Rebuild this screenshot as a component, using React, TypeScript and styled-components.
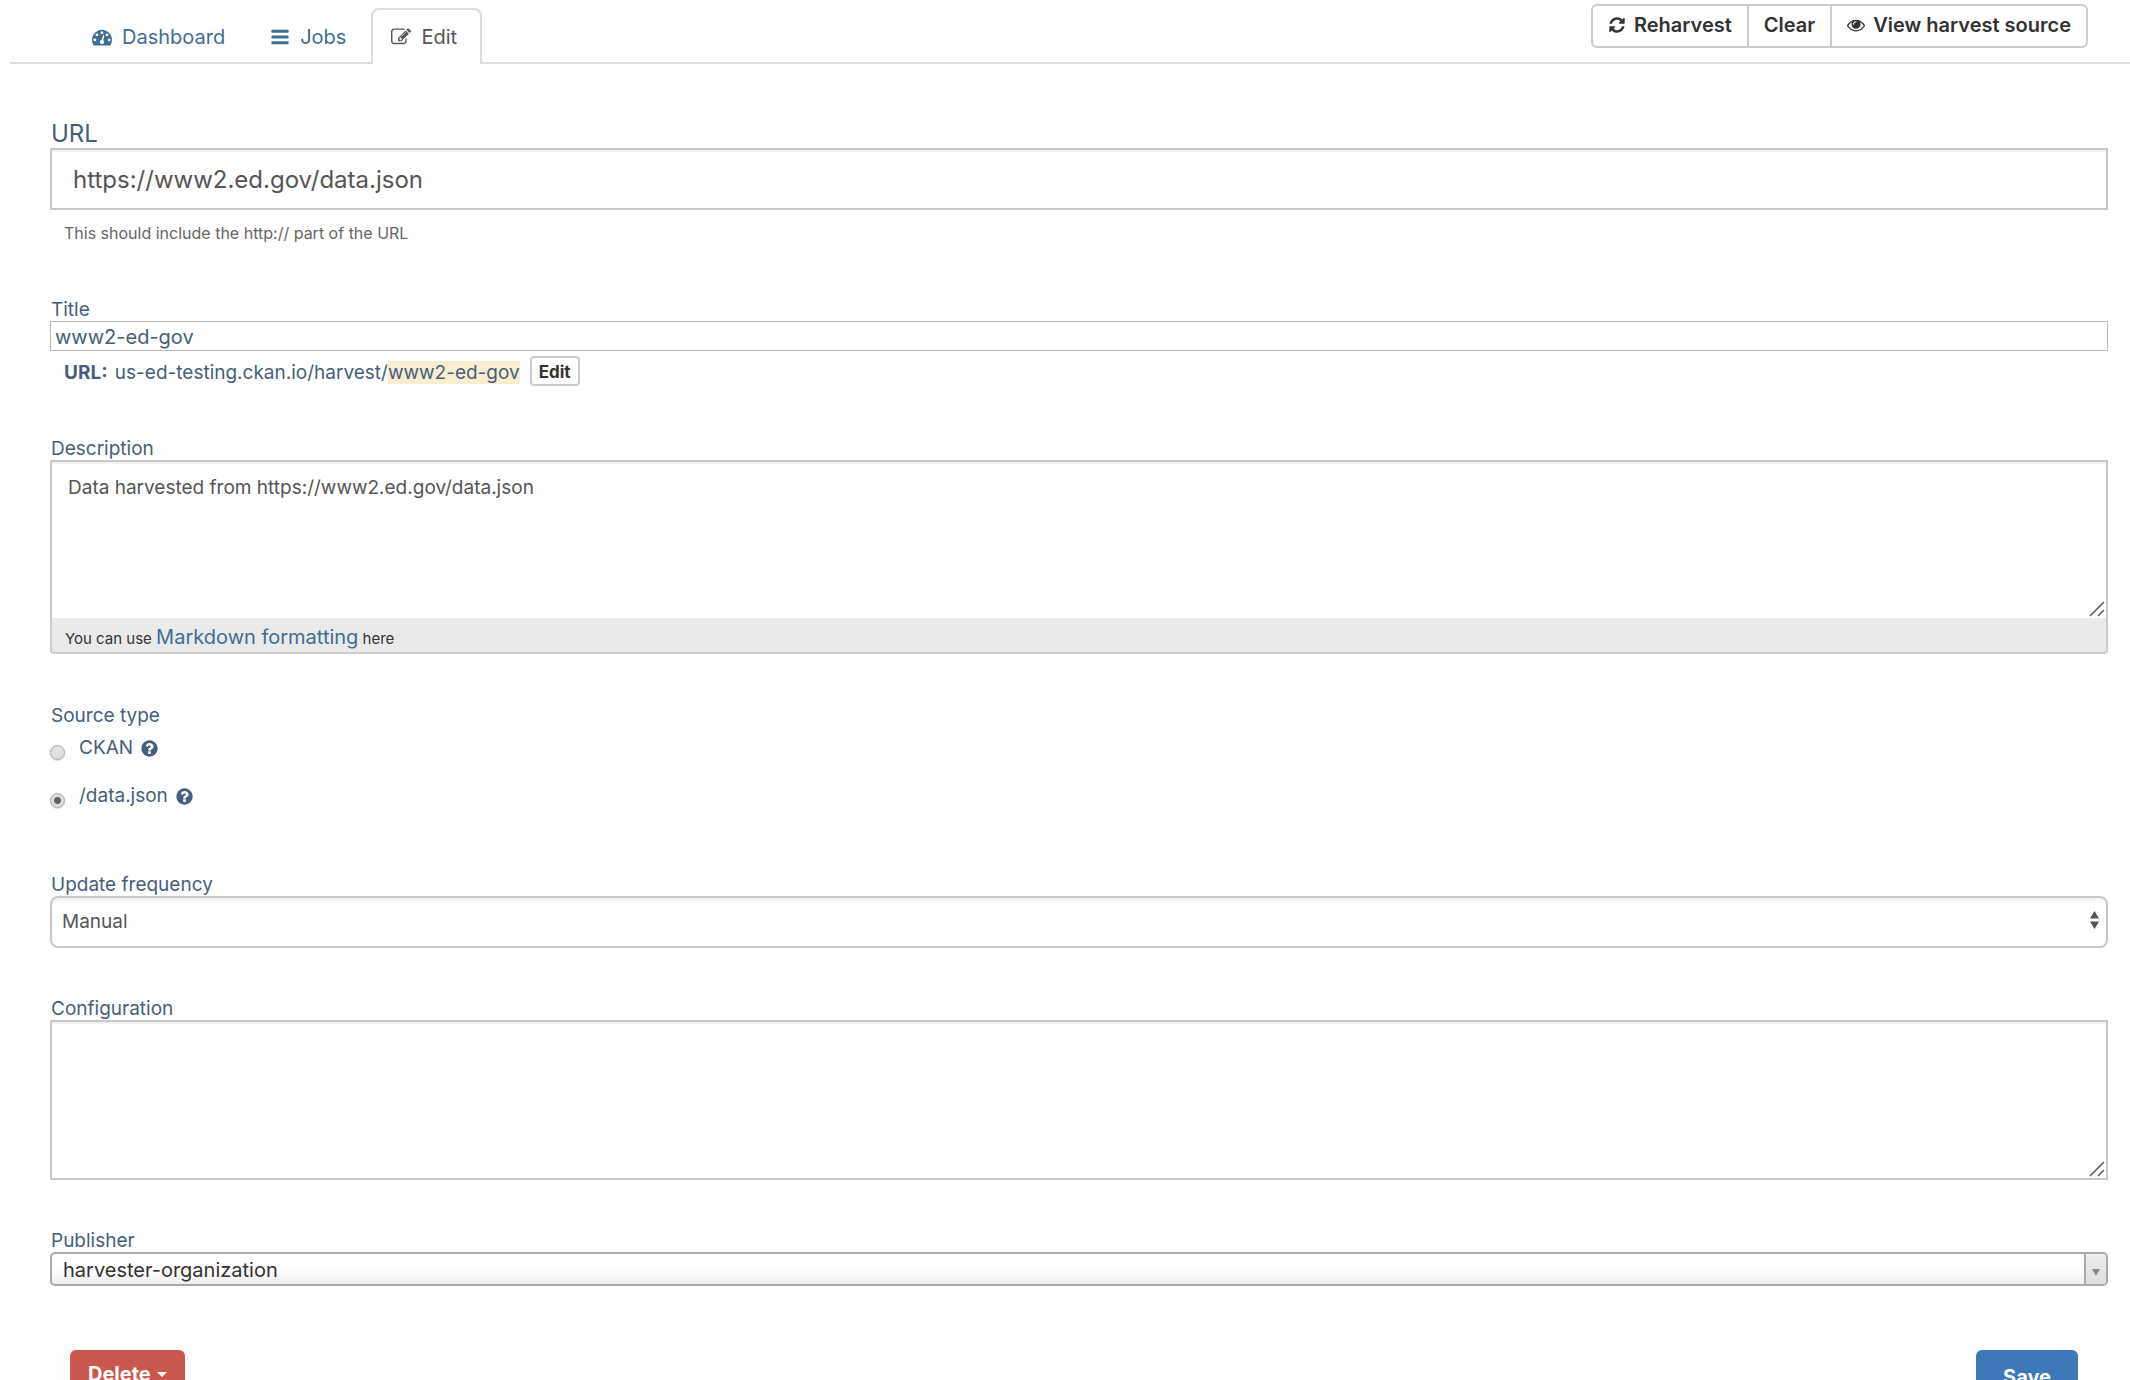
import React, { useState } from "react";
import styled, { createGlobalStyle, css } from "styled-components";

const GlobalStyle = createGlobalStyle`
  *, *::before, *::after { box-sizing: border-box; }
  html { scrollbar-width: none; }
  body {
    margin: 0;
    background: #fff;
    color: #455f7b;
    font-family: Inter, "Liberation Sans", sans-serif;
    font-size: 19px;
    line-height: 24px;
  }
  input, select, textarea, button { font-family: inherit; }
`;

const icons = {
  dashboard:
    "M384 1152q0-53-37.5-90.5t-90.5-37.5-90.5 37.5-37.5 90.5 37.5 90.5 90.5 37.5 90.5-37.5 37.5-90.5zm192-448q0-53-37.5-90.5t-90.5-37.5-90.5 37.5-37.5 90.5 37.5 90.5 90.5 37.5 90.5-37.5 37.5-90.5zm428 481l101-382q6-26-7.5-48.5t-38.5-29.5-48 6.5-30 39.5l-101 382q-60 5-107 43.5t-63 98.5q-20 77 20 146t117 89 146-20 89-117q16-60-6-117t-72-91zm660-33q0-53-37.5-90.5t-90.5-37.5-90.5 37.5-37.5 90.5 37.5 90.5 90.5 37.5 90.5-37.5 37.5-90.5zm-640-640q0-53-37.5-90.5t-90.5-37.5-90.5 37.5-37.5 90.5 37.5 90.5 90.5 37.5 90.5-37.5 37.5-90.5zm448 192q0-53-37.5-90.5t-90.5-37.5-90.5 37.5-37.5 90.5 37.5 90.5 90.5 37.5 90.5-37.5 37.5-90.5zm320 448q0 261-141 483-19 29-54 29h-1402q-35 0-54-29-141-221-141-483 0-182 71-348t191-286 286-191 348-71 348 71 286 191 191 286 71 348z",
  bars:
    "M1664 1344v128q0 26-19 45t-45 19h-1408q-26 0-45-19t-19-45v-128q0-26 19-45t45-19h1408q26 0 45 19t19 45zm0-512v128q0 26-19 45t-45 19h-1408q-26 0-45-19t-19-45v-128q0-26 19-45t45-19h1408q26 0 45 19t19 45zm0-512v128q0 26-19 45t-45 19h-1408q-26 0-45-19t-19-45v-128q0-26 19-45t45-19h1408q26 0 45 19t19 45z",
  edit:
    "M888 1184l116-116-152-152-116 116v56h96v96h56zm440-720q-16-16-33 1l-350 350q-17 17-1 33t33-1l350-350q17-17 1-33zm80 594v190q0 119-84.5 203.5t-203.5 84.5h-832q-119 0-203.5-84.5t-84.5-203.5v-832q0-119 84.5-203.5t203.5-84.5h832q63 0 117 25 15 7 18 23 3 17-9 29l-49 49q-14 14-32 8-23-6-45-6h-832q-66 0-113 47t-47 113v832q0 66 47 113t113 47h832q66 0 113-47t47-113v-126q0-13 9-22l64-64q15-15 35-7t20 29zm-96-738l288 288-672 672h-288v-288zm444 132l-92 92-288-288 92-92q28-28 68-28t68 28l152 152q28 28 28 68t-28 68z",
  refresh:
    "M1639 1056q0 5-1 7-64 268-268 434.5t-478 166.5q-146 0-282.5-55t-243.5-157l-129 129q-19 19-45 19t-45-19-19-45v-448q0-26 19-45t45-19h448q26 0 45 19t19 45-19 45l-137 137q71 66 161 102t187 36q134 0 250-65t186-179q11-17 53-117 8-23 30-23h192q13 0 22.5 9.5t9.5 22.5zm25-800v448q0 26-19 45t-45 19h-448q-26 0-45-19t-19-45 19-45l138-138q-148-137-349-137-134 0-250 65t-186 179q-11 17-53 117-8 23-30 23h-199q-13 0-22.5-9.5t-9.5-22.5v-7q65-268 270-434.5t480-166.5q146 0 284 55.5t245 156.5l130-129q19-19 45-19t45 19 19 45z",
  eye:
    "M1664 960q-152-236-381-353 61 104 61 225 0 185-131.5 316.5t-316.5 131.5-316.5-131.5-131.5-316.5q0-121 61-225-229 117-381 353 133 205 333.5 326.5t434.5 121.5 434.5-121.5 333.5-326.5zm-720-384q0-20-14-34t-34-14q-125 0-214.5 89.5t-89.5 214.5q0 20 14 34t34 14 34-14 14-34q0-86 61-147t147-61q20 0 34-14t14-34zm848 384q0 34-20 69-140 230-376.5 368.5t-499.5 138.5-499.5-139-376.5-368q-20-35-20-69t20-69q140-229 376.5-368t499.5-139 499.5 139 376.5 368q20 35 20 69z",
  question:
    "M1024 1376v-192q0-14-9-23t-23-9h-192q-14 0-23 9t-9 23v192q0 14 9 23t23 9h192q14 0 23-9t9-23zm256-672q0-88-55.5-163t-138.5-116-170-41q-243 0-371 213-15 24 8 42l132 100q7 6 19 6 16 0 25-12 53-68 86-92 34-24 86-24 48 0 85.5 26t37.5 59q0 38-20 61t-68 45q-63 28-115.5 86.5t-52.5 125.5v36q0 14 9 23t23 9h192q14 0 23-9t9-23q0-19 21.5-49.5t54.5-49.5q32-18 49-28.5t46-35 44.5-48 28-60.5 12.5-81zm384 192q0 209-103 385.5t-279.5 279.5-385.5 103-385.5-103-279.5-279.5-103-385.5 103-385.5 279.5-279.5 385.5-103 385.5 103 279.5 279.5 103 385.5z",
};

const Glyph = styled.svg<{ $size: number }>`
  width: ${(p) => p.$size}px;
  height: ${(p) => p.$size}px;
  flex: none;
  fill: currentColor;
`;

function Icon({ name, size = 20 }: { name: keyof typeof icons; size?: number }) {
  return (
    <Glyph $size={size} viewBox="0 0 1792 1792" aria-hidden="true">
      <path d={icons[name]} />
    </Glyph>
  );
}

const Header = styled.header`
  display: flex;
  justify-content: space-between;
  align-items: flex-start;
  height: 64px;
  margin-left: 10px;
  padding: 0 42px 0 62px;
  border-bottom: 2px solid #ddd;
`;

const Tabs = styled.nav`
  display: flex;
  padding-top: 8px;
`;

const Tab = styled.a<{ $active?: boolean }>`
  display: flex;
  align-items: center;
  gap: 10px;
  height: 56px;
  padding: 0 23px 0 18px;
  border: 2px solid transparent;
  border-bottom: 0;
  border-radius: 8px 8px 0 0;
  color: #3f6d92;
  font-size: 20px;
  text-decoration: none;
  ${(p) =>
    p.$active &&
    css`
      border-color: #ddd;
      background: #fff;
      color: #555;
    `}
`;

const ButtonGroup = styled.div`
  display: flex;
  margin-top: 4px;
  border: 2px solid #ccc;
  border-radius: 6px;
`;

const ToolButton = styled.button`
  display: flex;
  align-items: center;
  gap: 8px;
  height: 40px;
  padding: 0 15px 2px;
  border: 0;
  background: none;
  color: #333;
  font-size: 20px;
  font-weight: 600;
  & + & {
    border-left: 2px solid #ccc;
  }
`;

const Form = styled.form`
  display: flex;
  flex-direction: column;
  gap: 48px;
  padding: 54px 22px 40px 50px;
`;

const Field = styled.div`
  display: flex;
  flex-direction: column;
`;

const Label = styled.label<{ $large?: boolean }>`
  padding: 2px 0 0 1px;
  font-size: ${(p) => (p.$large ? 24 : 19)}px;
  line-height: ${(p) => (p.$large ? 28 : 22)}px;
`;

const boxed = css`
  width: 100%;
  border: 2px solid #c8c8c8;
  background: #fff;
  color: #555;
  box-shadow: inset 0 2px 2px rgba(0, 0, 0, 0.06);
  outline: 0;
`;

const UrlInput = styled.input`
  ${boxed}
  height: 62px;
  padding: 0 21px;
  font-size: 24px;
`;

const Hint = styled.small`
  margin: 8px 0 1px 14px;
  color: #666;
  font-size: 16px;
  line-height: 30px;
`;

const TitleInput = styled.input`
  width: 100%;
  height: 30px;
  padding: 2px 4px 0;
  border: 1px solid #b8b8b8;
  background: #fff;
  color: #455f7b;
  font-size: 20px;
  outline: 0;
`;

const Permalink = styled.div`
  display: flex;
  align-items: center;
  gap: 10px;
  margin: 5px 0 2px 14px;
  height: 30px;
`;

const PermalinkText = styled.span`
  padding-top: 4px;
`;

const PermalinkLabel = styled.strong`
  margin-right: 2px;
`;

const Slug = styled.span`
  background: #f8edcf;
`;

const SmallButton = styled.button`
  height: 30px;
  padding: 1px 7px 0;
  border: 2px solid #ccc;
  border-radius: 4px;
  background: #fff;
  color: #333;
  font-size: 17px;
  font-weight: 700;
`;

const TextBox = styled.div`
  position: relative;
`;

const TextArea = styled.textarea<{ $joined?: boolean }>`
  ${boxed}
  display: block;
  height: ${(p) => (p.$joined ? 158 : 160)}px;
  padding: 13px 16px;
  border-bottom-width: ${(p) => (p.$joined ? 0 : 2)}px;
  font-size: 19px;
  line-height: 26px;
  resize: vertical;
  &::-webkit-resizer {
    display: none;
  }
`;

const Grip = styled.svg<{ $joined?: boolean }>`
  position: absolute;
  right: 3px;
  bottom: ${(p) => (p.$joined ? 1 : 3)}px;
  width: 16px;
  height: 16px;
  fill: none;
  stroke: #5c5a60;
  stroke-width: 1.6;
  pointer-events: none;
`;

function ResizableText({
  id,
  joined,
  value,
}: {
  id: string;
  joined?: boolean;
  value?: string;
}) {
  return (
    <TextBox>
      <TextArea id={id} $joined={joined} defaultValue={value} />
      <Grip $joined={joined} viewBox="0 0 16 16" aria-hidden="true">
        <path d="M1 15L15 1M9 15L15 9" />
      </Grip>
    </TextBox>
  );
}

const MarkdownBar = styled.div`
  height: 36px;
  padding: 2px 13px 0;
  border: 2px solid #ccc;
  border-top: 0;
  border-radius: 0 0 4px 4px;
  background: #eaeaea;
  color: #333;
  font-size: 15px;
  line-height: 34px;
`;

const TextLink = styled.a`
  color: #3f6d92;
  font-size: 20px;
  text-decoration: none;
`;

const RadioSet = styled.fieldset`
  display: flex;
  flex-direction: column;
  gap: 18px;
  margin: 0;
  padding: 0 0 13px;
  border: 0;
`;

const Legend = styled.legend`
  padding: 2px 0 5px 1px;
`;

const Option = styled.label`
  display: flex;
  align-items: flex-start;
  height: 30px;
  line-height: 30px;
`;

const OptionText = styled.span`
  display: flex;
  align-items: center;
  gap: 7px;
  padding-left: 14px;
`;

const Radio = styled.input`
  appearance: none;
  width: 15px;
  height: 15px;
  margin: 12px 0 0;
  border: 1px solid #a5a5a5;
  border-radius: 50%;
  background: linear-gradient(#e4e4e4, #dadcdb);
  box-shadow: 0 1px 1px rgba(0, 0, 0, 0.15);
  &:checked {
    background: radial-gradient(circle, #665f68 3px, #dedede 4px);
  }
`;

const SelectWrap = styled.div`
  position: relative;
  display: flex;
`;

const Select = styled.select`
  ${boxed}
  appearance: none;
  height: 52px;
  padding: 0 40px 2px 10px;
  border-radius: 8px;
  font-size: 19px;
`;

const Arrows = styled.svg`
  position: absolute;
  right: 9px;
  top: 15px;
  width: 9px;
  height: 18px;
  fill: #555;
  pointer-events: none;
`;

const PublisherSelect = styled(Select)`
  height: 34px;
  padding: 2px 40px 0 11px;
  border-color: #aaa;
  border-radius: 5px;
  background: linear-gradient(#fff 50%, #eee);
  box-shadow: none;
  color: #333;
  font-size: 20px;
`;

const Chevron = styled.span`
  position: absolute;
  right: 2px;
  top: 2px;
  bottom: 2px;
  display: flex;
  align-items: flex-end;
  justify-content: center;
  width: 22px;
  padding-bottom: 8px;
  border-left: 2px solid #aaa;
  border-radius: 0 3px 3px 0;
  background: linear-gradient(#eee, #dcdedd);
  pointer-events: none;
`;

const Triangle = styled.svg`
  width: 8px;
  height: 7px;
  fill: #84898f;
`;

const Actions = styled.div`
  display: flex;
  justify-content: space-between;
  align-items: flex-start;
  padding: 16px 30px 0 20px;
`;

const ActionButton = styled.button<{ $danger?: boolean }>`
  display: flex;
  align-items: center;
  justify-content: center;
  gap: 6px;
  height: ${(p) => (p.$danger ? 48 : 54)}px;
  padding: 0 ${(p) => (p.$danger ? 18 : 27)}px;
  border: 0;
  border-radius: 6px;
  background: ${(p) => (p.$danger ? "#c9584f" : "#3d78b9")};
  color: #fff;
  font-size: 20px;
  font-weight: 700;
`;

const Caret = styled.svg`
  width: 10px;
  height: 5px;
  fill: currentColor;
`;

const sourceTypes = [
  { value: "ckan", label: "CKAN" },
  { value: "datajson", label: "/data.json" },
];

export default function App() {
  const [source, setSource] = useState("datajson");

  return (
    <>
      <GlobalStyle />
      <Header>
        <Tabs aria-label="Harvest source">
          <Tab href="#dashboard">
            <Icon name="dashboard" />
            Dashboard
          </Tab>
          <Tab href="#jobs">
            <Icon name="bars" />
            Jobs
          </Tab>
          <Tab href="#edit" $active aria-current="page">
            <Icon name="edit" />
            Edit
          </Tab>
        </Tabs>
        <ButtonGroup>
          <ToolButton type="button">
            <Icon name="refresh" size={18} />
            Reharvest
          </ToolButton>
          <ToolButton type="button">Clear</ToolButton>
          <ToolButton type="button">
            <Icon name="eye" size={18} />
            View harvest source
          </ToolButton>
        </ButtonGroup>
      </Header>

      <Form onSubmit={(e) => e.preventDefault()}>
        <Field>
          <Label htmlFor="url" $large>
            URL
          </Label>
          <UrlInput id="url" defaultValue="https://www2.ed.gov/data.json" />
          <Hint>This should include the http:// part of the URL</Hint>
        </Field>

        <Field>
          <Label htmlFor="title">Title</Label>
          <TitleInput id="title" defaultValue="www2-ed-gov" />
          <Permalink>
            <PermalinkText>
              <PermalinkLabel>URL:</PermalinkLabel> us-ed-testing.ckan.io/harvest/
              <Slug>www2-ed-gov</Slug>
            </PermalinkText>
            <SmallButton type="button">Edit</SmallButton>
          </Permalink>
        </Field>

        <Field>
          <Label htmlFor="description">Description</Label>
          <ResizableText
            id="description"
            joined
            value="Data harvested from https://www2.ed.gov/data.json"
          />
          <MarkdownBar>
            You can use <TextLink href="#markdown">Markdown formatting</TextLink> here
          </MarkdownBar>
        </Field>

        <RadioSet>
          <Legend>Source type</Legend>
          {sourceTypes.map(({ value, label }) => (
            <Option key={value}>
              <Radio
                type="radio"
                name="source"
                value={value}
                checked={source === value}
                onChange={() => setSource(value)}
              />
              <OptionText>
                {label}
                <Icon name="question" size={19} />
              </OptionText>
            </Option>
          ))}
        </RadioSet>

        <Field>
          <Label htmlFor="frequency">Update frequency</Label>
          <SelectWrap>
            <Select id="frequency" defaultValue="Manual">
              <option>Manual</option>
            </Select>
            <Arrows viewBox="0 0 9 18" aria-hidden="true">
              <path d="M4.5 0L9 7.5H0zM0 10.5H9L4.5 18z" />
            </Arrows>
          </SelectWrap>
        </Field>

        <Field>
          <Label htmlFor="configuration">Configuration</Label>
          <ResizableText id="configuration" />
        </Field>

        <Field>
          <Label htmlFor="publisher">Publisher</Label>
          <SelectWrap>
            <PublisherSelect id="publisher" defaultValue="harvester-organization">
              <option>harvester-organization</option>
            </PublisherSelect>
            <Chevron aria-hidden="true">
              <Triangle viewBox="0 0 8 7">
                <path d="M0 0H8L4 7z" />
              </Triangle>
            </Chevron>
          </SelectWrap>
        </Field>

        <Actions>
          <ActionButton type="button" $danger>
            Delete
            <Caret viewBox="0 0 10 5" aria-hidden="true">
              <path d="M0 0H10L5 5z" />
            </Caret>
          </ActionButton>
          <ActionButton type="submit">Save</ActionButton>
        </Actions>
      </Form>
    </>
  );
}
